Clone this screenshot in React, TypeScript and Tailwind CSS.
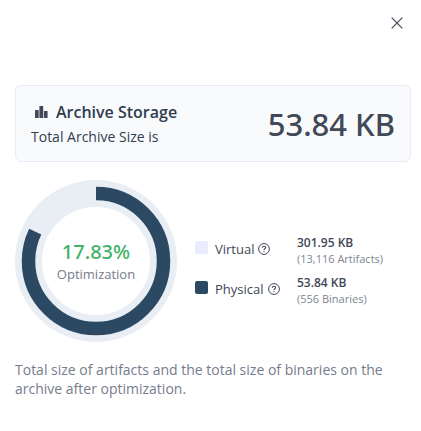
import type { ReactNode } from "react";

type LegendRowProps = {
  label: string;
  swatch: string;
  value: string;
  detail: string;
};

const CloseIcon = () => (
  <svg viewBox="0 0 12 12" className="h-3 w-3" fill="none" stroke="currentColor" aria-hidden="true">
    <path d="M.7.7l10.6 10.6M11.3.7L.7 11.3" strokeWidth="1.2" />
  </svg>
);

const BarsIcon = () => (
  <svg viewBox="0 0 13 12" className="h-3 w-[13px]" fill="#414857" aria-hidden="true">
    <rect x="0" y="4" width="3.7" height="8" rx=".4" />
    <rect x="4.4" y="0" width="3.8" height="12" rx=".4" />
    <rect x="8.9" y="5" width="3.7" height="7" rx=".4" />
  </svg>
);

const HelpIcon = () => (
  <svg viewBox="0 0 12 12" className="h-3 w-3" fill="none" stroke="currentColor" aria-hidden="true">
    <circle cx="6" cy="6" r="5.4" />
    <path d="M4.4 4.7c0-.9.7-1.5 1.6-1.5s1.6.6 1.6 1.4c0 1.2-1.6 1.1-1.6 2.4" strokeWidth="1.1" />
    <path d="M6 7.9v1.2" strokeWidth="1.2" />
  </svg>
);

const Ring = ({ percent, children }: { percent: number; children: ReactNode }) => (
  <div className="grid h-[162px] w-[162px] shrink-0 place-items-center">
    <svg viewBox="0 0 162 162" className="col-start-1 row-start-1 h-full w-full" fill="none" aria-hidden="true">
      <circle cx="81" cy="81" r="67.5" stroke="#e9eef5" strokeWidth="27" />
      <circle
        cx="81"
        cy="81"
        r="67.5"
        stroke="#2c4964"
        strokeWidth="13.5"
        pathLength="100"
        strokeDasharray={`${100 - percent} ${percent}`}
        transform="rotate(-90 81 81)"
      />
    </svg>
    <div className="col-start-1 row-start-1 pt-0.5 text-center">{children}</div>
  </div>
);

const LegendRow = ({ label, swatch, value, detail }: LegendRowProps) => (
  <div className="flex items-start">
    <dt className="flex w-[102px] items-start pt-1">
      <span className={`mt-0.5 mr-[7px] h-[13px] w-[13px] rounded-xs ${swatch}`} />
      <span className="text-[13px] leading-5">{label}</span>
      <button type="button" aria-label={`About ${label}`} className="mt-1 ml-1">
        <HelpIcon />
      </button>
    </dt>
    <dd>
      <div className="text-xs leading-4 font-semibold">{value}</div>
      <div className="text-[11px] leading-[15px] text-[#80858f]">{detail}</div>
    </dd>
  </div>
);

const App = () => {
  return (
    <section className="bg-white px-[15px] pb-8 font-['Open_Sans','Noto_Sans',sans-serif] text-[#414857]">
      <div className="flex h-[85px] justify-end pt-[17px]">
        <button type="button" aria-label="Close" className="mr-[3px] h-3 w-3">
          <CloseIcon />
        </button>
      </div>

      <div className="mr-[-5px] flex items-center justify-between rounded-md border border-[#e8eafd] bg-[#f9fafc] px-[15px] py-3">
        <div className="pt-0.5 text-[#2f3d50]">
          <h2 className="flex items-center gap-2 pl-1 text-base leading-6 font-semibold">
            <BarsIcon />
            Archive Storage
          </h2>
          <p className="text-sm leading-[25px]">Total Archive Size is</p>
        </div>
        <div className="font-['Noto_Sans',sans-serif] text-[31px] leading-10 font-medium">53.84 KB</div>
      </div>

      <div className="mt-[18px] flex items-center gap-[18px]">
        <Ring percent={17.83}>
          <div className="font-['Noto_Sans',sans-serif] text-xl leading-6 font-medium text-[#40b368]">17.83%</div>
          <div className="text-[13px] leading-5 text-[#777c8c]">Optimization</div>
        </Ring>
        <dl className="flex flex-col gap-[9px] pt-[18px]">
          <LegendRow label="Virtual" swatch="bg-[#e9edff]" value="301.95 KB" detail="(13,116 Artifacts)" />
          <LegendRow label="Physical" swatch="bg-[#2c4964]" value="53.84 KB" detail="(556 Binaries)" />
        </dl>
      </div>

      <p className="mt-[18px] text-sm leading-[19px] text-[#777c8c]">
        Total size of artifacts and the total size of binaries on the archive after optimization.
      </p>
    </section>
  );
};

export default App;
